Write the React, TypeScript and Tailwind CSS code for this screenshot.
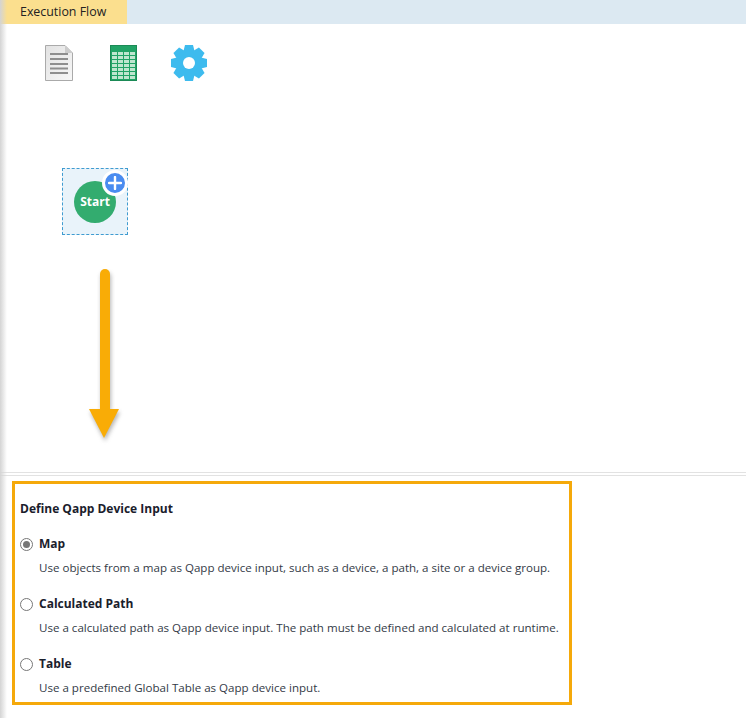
import React from 'react';

const options = [
  { name: 'Map', text: 'Use objects from a map as Qapp device input, such as a device, a path, a site or a device group.', checked: true },
  { name: 'Calculated Path', text: 'Use a calculated path as Qapp device input. The path must be defined and calculated at runtime.', checked: false },
  { name: 'Table', text: 'Use a predefined Global Table as Qapp device input.', checked: false },
];

function DocIcon() {
  return (
    <svg width="28" height="37" viewBox="0 0 28 37">
      <defs>
        <linearGradient id="doc" x1="0" y1="0" x2="1" y2="1">
          <stop offset="0" stopColor="#e2e2e2" />
          <stop offset="1" stopColor="#f7f7f7" />
        </linearGradient>
      </defs>
      <path d="M0.5 0.5H20L27.5 8V35.5H0.5Z" fill="url(#doc)" stroke="#aaaaaa" />
      <path d="M20 0.5V8H27.5Z" fill="#cccccc" />
      <g fill="#8e8e8e">
        <rect x="5" y="8" width="18" height="2" />
        <rect x="5" y="13" width="18" height="2" />
        <rect x="5" y="18" width="18" height="2" />
        <rect x="5" y="22.5" width="18" height="2" />
        <rect x="5" y="27" width="18" height="2" />
      </g>
    </svg>
  );
}

function SheetIcon() {
  const rows = [0, 1, 2, 3, 4, 5, 6];
  const cols = [0, 1, 2, 3];
  return (
    <svg width="27" height="36" viewBox="0 0 27 36">
      <rect width="27" height="36" fill="#21a366" />
      <rect x="0.5" y="0.5" width="26" height="35" fill="none" stroke="#1b8a56" />
      {rows.map((r) =>
        cols.map((c) => (
          <rect key={`${r}-${c}`} x={2 + c * 6} y={7 + r * 4} width="5" height="3" fill="#bfe6cf" />
        )),
      )}
    </svg>
  );
}

function GearIcon() {
  return (
    <svg width="36" height="36" viewBox="0 0 36 36">
      <g fill="#3dbbee">
        <circle cx="18" cy="18" r="13" />
        {[0, 45, 90, 135, 180, 225, 270, 315].map((a) => (
          <path key={a} d="M14 0H22L24 8H12Z" transform={`rotate(${a} 18 18)`} />
        ))}
      </g>
      <circle cx="18" cy="18" r="6" fill="#ffffff" />
    </svg>
  );
}

function Arrow() {
  return (
    <svg width="50" height="180" viewBox="0 0 50 180" className="block">
      <defs>
        <filter id="sh" x="-40%" y="-10%" width="180%" height="120%">
          <feGaussianBlur stdDeviation="2" />
        </filter>
      </defs>
      <g fill="#777777" opacity="0.55" filter="url(#sh)" transform="translate(1 3)">
        <path d="M10 140H40L25 169Z" />
        <rect x="21" y="0" width="10" height="140" rx="5" />
      </g>
      <rect x="21" y="0" width="10" height="145" rx="5" fill="#f9ac06" />
      <path d="M10 140H40L25 169Z" fill="#f9ac06" />
    </svg>
  );
}

export default function App() {
  return (
    <div className="relative w-[746px] h-[718px] overflow-hidden bg-white font-['Open_Sans',sans-serif] text-[#111827]">
      {/* Tab bar */}
      <div className="h-6 bg-[#dce9f2]">
        <div className="w-[127px] h-6 bg-[#fbdf8e] pl-5 text-[12.4px] leading-6 text-[#222222]">Execution Flow</div>
      </div>

      {/* Toolbar */}
      <div className="flex items-start h-[144px] pt-[21px] pl-[45px]">
        <DocIcon />
        <div className="ml-[37px]"><SheetIcon /></div>
        <div className="ml-[34px]"><GearIcon /></div>
      </div>

      {/* Canvas */}
      <div className="h-[304px] pl-[62px]">
        <div className="relative flex items-center justify-center w-[66px] h-[67px] border border-dashed border-[#3f9bd0] bg-[#e9f3fa]">
          <div className="flex items-center justify-center w-[42px] h-[42px] rounded-full bg-[#33ac6f] text-white text-[12px] font-bold">Start</div>
          <div className="absolute top-[1px] right-[-1px] flex items-center justify-center w-[26px] h-[26px] rounded-full bg-[#4a8cf0] border-[3px] border-white">
            <svg width="14" height="14" viewBox="0 0 14 14">
              <path d="M7 1V13M1 7H13" stroke="#ffffff" strokeWidth="2.4" strokeLinecap="round" />
            </svg>
          </div>
        </div>
        <div className="mt-[34px] ml-[17px]"><Arrow /></div>
      </div>

      {/* Divider */}
      <div className="h-1 border-y border-[#e2e2e2]" />

      {/* Device input */}
      <div className="ml-3 mt-[5px] w-[560px] h-[224px] border-[3px] border-[#f5a90a] pl-[5px] pt-[15px]">
        <div className="text-[12px] leading-[20px] font-bold text-[#1a202c]">Define Qapp Device Input</div>
        <div className="mt-[15px] flex flex-col">
          {options.map((o) => (
            <div key={o.name} className="h-[60px]">
              <div className="flex items-center h-[20px]">
                <span className="flex items-center justify-center w-[13px] h-[13px] rounded-full border border-[#777777] bg-white">
                  {o.checked && <span className="w-[7px] h-[7px] rounded-full bg-[#777777]" />}
                </span>
                <span className="ml-[6px] text-[12px] font-bold text-[#1a202c]">{o.name}</span>
              </div>
              <div className="mt-[4px] pl-[19px] text-[11.57px] leading-[20px] text-[#333a46] whitespace-nowrap">{o.text}</div>
            </div>
          ))}
        </div>
      </div>

      {/* Left edge shadow */}
      <div className="absolute inset-y-0 left-0 w-[7px] bg-gradient-to-r from-[#d4d4d4] to-transparent pointer-events-none" />
    </div>
  );
}
